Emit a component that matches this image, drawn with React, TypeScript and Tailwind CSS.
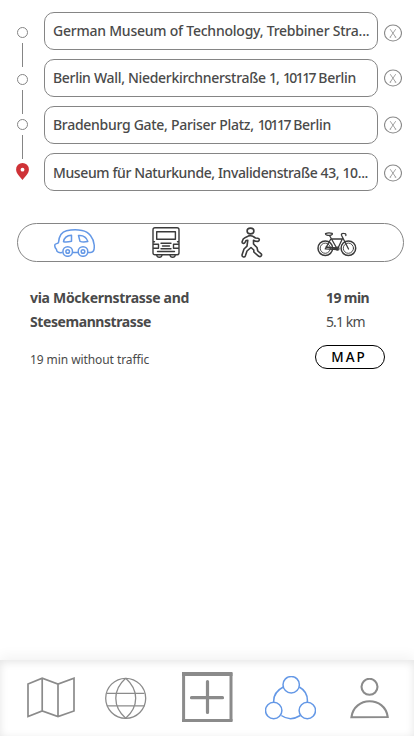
import React from "react";

const stops = [
  { street: "German Museum of Technology, Trebbiner Stra...", cls: "tracking-[-0.23px]" },
  { street: "Berlin Wall, Niederkirchnerstraße ", no: "1,", zip: "10117", city: " Berlin", cls: "tracking-[-0.31px]" },
  { street: "Bradenburg Gate, Pariser Platz,", zip: "10117", city: " Berlin", cls: "tracking-[-0.29px]" },
  { street: "Museum für Naturkunde, Invalidenstraße 43, 10...", cls: "tracking-[-0.39px] pt-0.5" },
];

const Dot = ({ className = "" }: { className?: string }) => (
  <span className={`h-[11px] w-[11px] rounded-full border border-[#858585] ${className}`} />
);

const Line = ({ className = "" }: { className?: string }) => (
  <span className={`h-6 w-px bg-[#858585] ${className}`} />
);

function Rail() {
  return (
    <div className="flex w-[13px] shrink-0 flex-col items-center pt-[15px]">
      <Dot />
      <Line className="mt-[5px]" />
      <Dot className="mt-[7px]" />
      <Line className="mt-[5px]" />
      <Dot className="mt-[5px]" />
      <Line className="mt-[5px]" />
      <svg className="mt-1 h-[17px] w-[13px]" viewBox="0 0 13 17">
        <path
          d="M6.5 0A6.4 6.4 0 0 0 .1 6.4C.1 10.5 4 13.5 6.5 17c2.500-3.500 6.400-6.500 6.400-10.600A6.400 6.400 0 0 0 6.500 0Z"
          fill="#cf3237"
        />
        <circle cx="6.500" cy="6.700" r="1.900" fill="#fff" />
      </svg>
    </div>
  );
}

const Remove = ({ className = "" }: { className?: string }) => (
  <button className={`block h-[18px] w-[18px] ${className}`} aria-label="Remove stop">
    <svg className="h-[18px] w-[18px]" viewBox="0 0 18 18" fill="none" stroke="#8a8a8a">
      <ellipse cx="9" cy="9" rx="8.500" ry="8" strokeWidth="1.100" />
      <path d="M6.200 5.200 11.700 13.200M11.700 5.200 6.200 13.200M5.700 13.200h1.400M10.800 13.200h1.400" strokeWidth=".8" />
    </svg>
  </button>
);

const CarIcon = () => (
  <svg className="h-7 w-[41px]" viewBox="0 0 41 28" fill="none" stroke="#6498e6" strokeWidth="1.500" strokeLinejoin="round" strokeLinecap="round">
    <path d="M8 23.500C5 24 2.500 23 2.500 20.500 1 19 .5 17 1 15.500 2 14.500 4 14.700 4.500 13.500 5 8 7 3 12.500 1.800c5-1.100 11-1.100 15.500-.4C35 2.500 39.500 9 40.200 16c.3 4-.5 7-2.700 7.200-1 .2-2 .2-3 .2M19.300 23.500h4.200" />
    <path d="M9.500 12.700C10 9 12 6.500 17.500 6.200v6c-3 .7-6 .8-8 .5ZM24.500 6.500c5-.4 8 1.500 9.300 6-3 .6-6 .5-7.800-.1Z" />
    <circle cx="13.700" cy="22.500" r="4.800" /><circle cx="13.700" cy="22.500" r="1.800" />
    <circle cx="29" cy="22.500" r="4.800" /><circle cx="29" cy="22.500" r="1.800" />
  </svg>
);

const BusIcon = () => (
  <svg className="h-[31px] w-7" viewBox="0 0 28 31" fill="none" stroke="#3b3b3b" strokeWidth="1.400" strokeLinejoin="round" strokeLinecap="round">
    <path d="M3 .8h22q2 0 2 2v23q0 2-2 2H3q-2 0-2-2v-23Q1 .8 3 .8ZM4.700 4.700h18.700v7.500H4.700ZM1 17.300h5.500v4H1M27 17.300h-5.500v4H27M9 16.300h10M10.500 19h7M9 21.700h10M5.500 24.500h17M1 14.700h1.500M25.500 14.700H27" />
    <path d="M4.700 28c.4 3 4.900 3 5.300 0M18 28c.4 3 4.900 3 5.300 0" />
  </svg>
);

const WalkIcon = () => (
  <svg className="h-[31px] w-[23px]" viewBox="0 0 23 31" fill="none" stroke="#3b3b3b" strokeWidth="1.600" strokeLinejoin="round">
    <ellipse cx="9.500" cy="4" rx="3.400" ry="2.900" />
    <path d="M7 9.200C5 10 3.500 10.700 2.200 12L1 15c.1 1.800 2.500 1.800 3 .5l1-2 1.800-.3-.8 6-3 2.800L1 28c-.2 2.200 2.700 2.600 3.300 1L6 24l4-3.500 2.800 2.500v2l5 4.300c1.800 1 3.700-1.200 2.400-2.400l-3.400-2.900-.8-3.500-3.500-3.500v-3.800l2 1 2.500.2c1.800-.3 1.800-3-.1-3.200l-2.400-.2-2.300-1.500c-1.200-1-4-1.100-5.200-.3Z" />
  </svg>
);

const BikeIcon = () => (
  <svg className="h-[25px] w-10" viewBox="0 0 40 25" fill="none" stroke="#3b3b3b" strokeWidth="1.300" strokeLinejoin="round" strokeLinecap="round">
    <circle cx="8.300" cy="16.200" r="7.300" strokeWidth="1.500" /><circle cx="8.300" cy="16.200" r="5.100" strokeWidth=".9" />
    <circle cx="31.400" cy="16.200" r="7.300" strokeWidth="1.500" /><circle cx="31.400" cy="16.200" r="5.100" strokeWidth=".9" />
    <path d="M8.500 1.700c2-.9 4.800-.8 6.700-.3.600 1-1 1.800-2.200 2-2 0-4.500-.5-4.500-1.700ZM12.500 3.500l8 14M13.800 7h11.500l-5 10.500-12-.6L13.800 7ZM9 15l10 1M31.500 17 24.500 3.200c-.3-1.500.5-2 2-1.900 1.700 0 2.700.7 2.300 2.200" />
    <circle cx="20.500" cy="16.700" r="1.500" />
  </svg>
);

function Stops() {
  return (
    <section className="flex pl-4 pt-3">
      <Rail />
      <div className="ml-[15px] flex w-[334px] flex-col gap-[9px]">
        {stops.map((s) => (
          <div key={s.street} className="flex h-[38px] items-center rounded-[10px] border border-[#858585] pl-2">
            <span className={`whitespace-pre text-[14px] leading-5 font-medium text-[#4a4a4a] ${s.cls}`}>
              {s.street}
              {s.no && <span className="tracking-[-1px]">{s.no}</span>}
              {s.zip && <span className="pl-[2px] tracking-[-1.600px]">{" " + s.zip}</span>}
              {s.city}
            </span>
          </div>
        ))}
      </div>
      <div className="ml-1.5 flex flex-col pt-3">
        <Remove />
        <Remove className="mt-[27px]" />
        <Remove className="mt-[29px]" />
        <Remove className="mt-[30px]" />
      </div>
    </section>
  );
}

function BottomNav() {
  return (
    <nav className="flex h-[76px] items-start pl-[27px] shadow-[0_-4px_12px_rgba(0,0,0,0.05),inset_0_2px_8px_rgba(0,0,0,0.11)]">
      <svg className="mt-[17px] h-[41px] w-12" viewBox="0 0 48 41" fill="none" stroke="#8b8b8b" strokeWidth="1.700">
        <path d="M1 7 15.200 1.200 31 7 47 1.200V34L31 39.500 15.200 34 1 39.500ZM15.200 1.200V34M31 7v32.500" />
      </svg>
      <svg className="ml-[30px] mt-[17px] h-[42px] w-[42px]" viewBox="0 0 42 42" fill="none" stroke="#8b8b8b" strokeWidth="1.300">
        <circle cx="20.700" cy="21.300" r="20" />
        <path d="M20.700 1.300C7.500 13 7.500 29.500 20.700 41.300M20.700 1.300C34 13 34 29.500 20.700 41.300M2 16.300h37.500M2 28.800h37.500" />
      </svg>
      <svg className="ml-[35px] mt-3 h-[51px] w-[51px]" viewBox="0 0 51 51" fill="none" stroke="#8b8b8b">
        <path d="M0 2h50.500" strokeWidth="4" /><path d="M1.600 1v48" strokeWidth="3" />
        <path d="M49 1v48" strokeWidth="3" /><path d="M0 48.500h50.500" strokeWidth="3.200" />
        <path d="M25.500 9.500v31M9.500 25.700h31" strokeWidth="3.200" strokeLinecap="round" />
      </svg>
      <svg className="ml-8 mt-4 h-[44px] w-[51px]" viewBox="0 0 51 44" fill="none" stroke="#6498e6" strokeWidth="1.500">
        <circle cx="26.200" cy="8.700" r="8.200" /><circle cx="8.700" cy="34.500" r="8.200" /><circle cx="42.300" cy="34.500" r="8.200" />
        <path d="M18.300 11C11.500 14.500 8.300 20 8.700 26.300M34.300 11c6.200 3.500 8.600 9 8 15.300M16.300 39.500c5.500 3.900 12.700 3.900 19 0" />
      </svg>
      <svg className="ml-[34px] mt-[18px] h-[41px] w-[39px]" viewBox="0 0 39 41" fill="none" stroke="#8b8b8b" strokeWidth="2.100">
        <circle cx="19.500" cy="8.800" r="8" />
        <path d="M1.400 39.300C4 18 35 18 37.700 39Z" />
      </svg>
    </nav>
  );
}

export default function App() {
  return (
    <main className="flex h-[736px] w-[414px] flex-col overflow-hidden bg-white font-['Noto_Sans','Open_Sans',sans-serif] text-[#4a4a4a]">
      <Stops />
      <div className="ml-[17px] mt-8 flex h-[39px] w-[387px] shrink-0 rounded-full border border-[#858585]">
        <div className="ml-9 mt-[5px]"><CarIcon /></div>
        <div className="ml-[57px] mt-[3px]"><BusIcon /></div>
        <div className="ml-[61px] mt-[3px]"><WalkIcon /></div>
        <div className="ml-[53px] mt-[8px]"><BikeIcon /></div>
      </div>
      <section className="flex grow pl-[30px] pt-6">
        <div className="w-[285px]">
          <h1 className="text-[14px] leading-6 font-bold">
            <span className="block whitespace-nowrap tracking-[-0.300px]">via Möckernstrasse and</span>
            <span className="block whitespace-nowrap tracking-[-0.420px]">Stesemannstrasse</span>
          </h1>
          <p className="mt-4 text-[12px] leading-5 tracking-[-0.080px]">19 min without traffic</p>
        </div>
        <div>
          <div className="pl-[11px] text-[14px] leading-6 font-bold tracking-[-0.600px]">19 min</div>
          <div className="pl-[11px] text-[14px] leading-6 tracking-[-0.900px]">5.1 km</div>
          <button className="mt-[11px] flex h-6 w-[70px] items-center justify-center rounded-full border border-black pr-0.5 text-[13.500px] leading-5 font-medium tracking-[2px] text-black">MAP</button>
        </div>
      </section>
      <BottomNav />
    </main>
  );
}
